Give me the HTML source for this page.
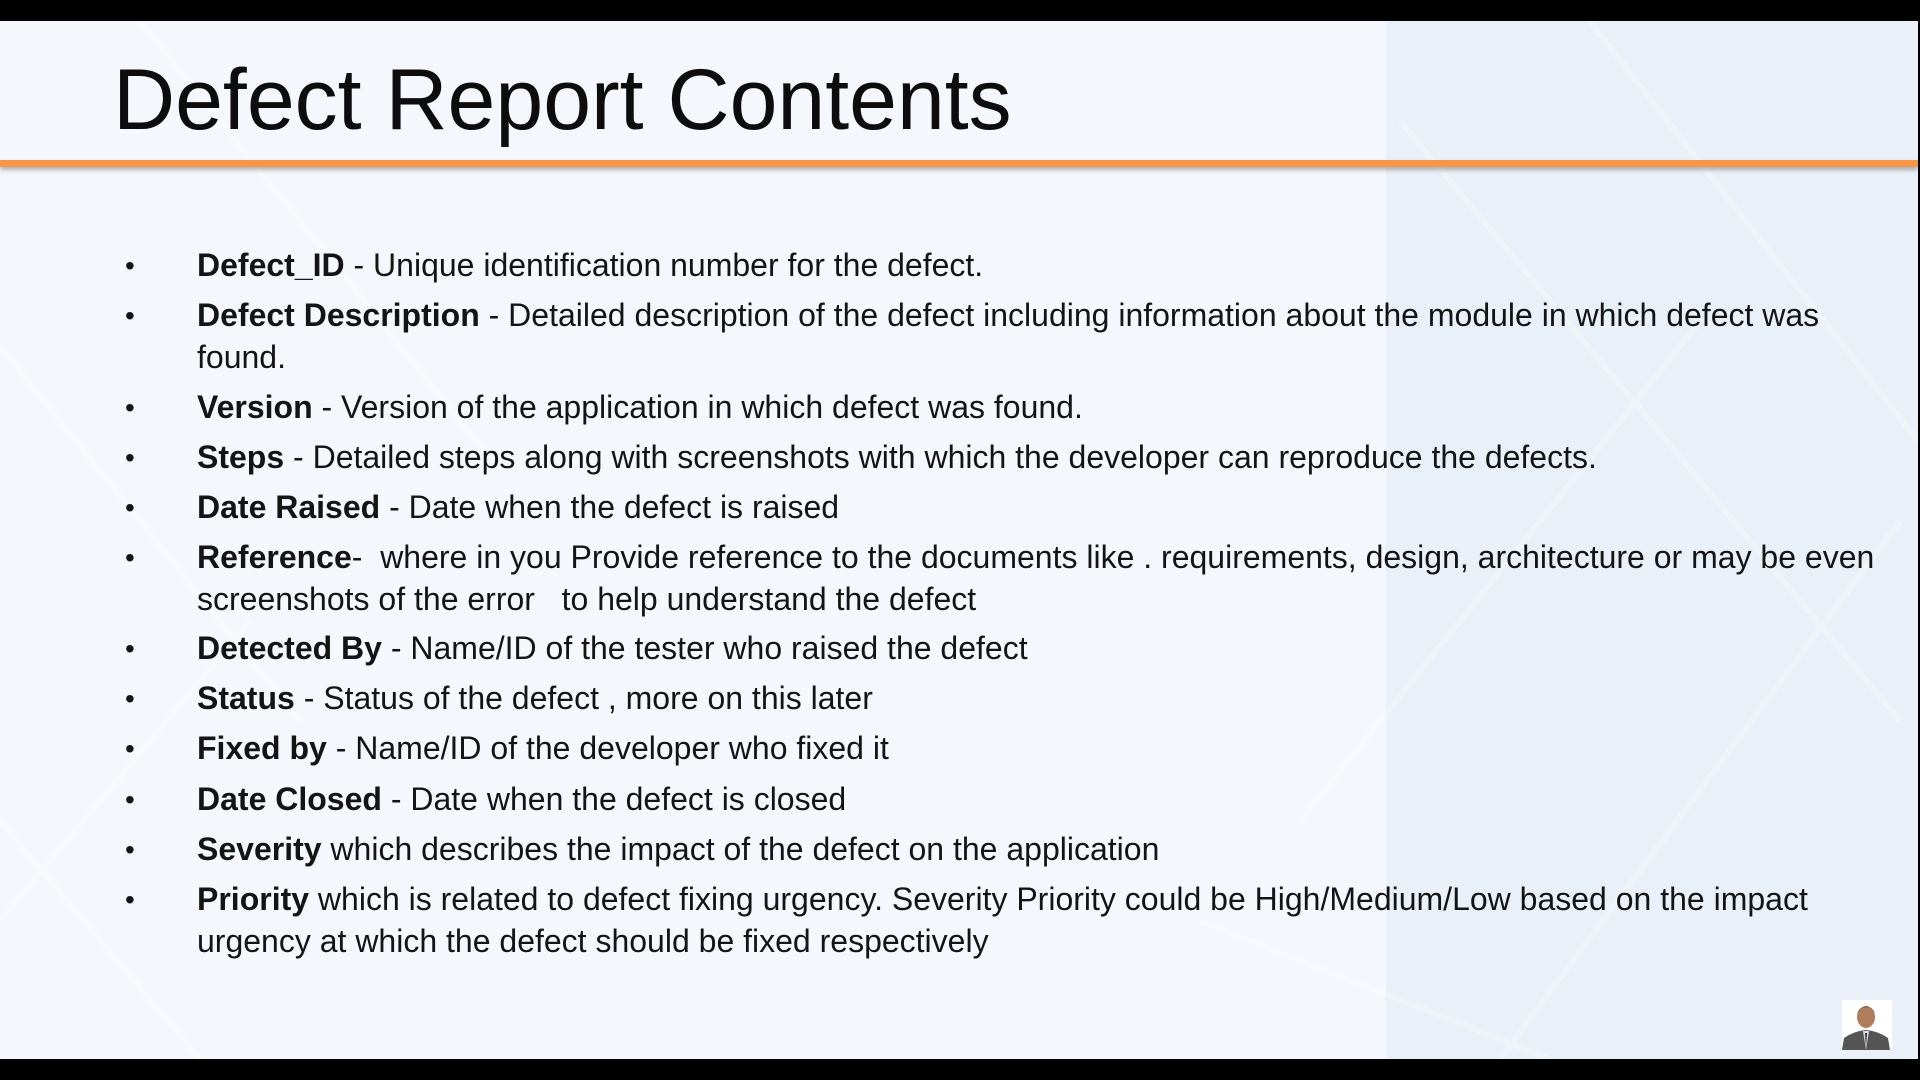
<!DOCTYPE html>
<html><head><meta charset="utf-8"><style>
html,body{margin:0;padding:0}
body{width:1920px;height:1080px;position:relative;overflow:hidden;background:#000;font-family:"Liberation Sans",sans-serif;color:#111}
#slide{position:absolute;left:0;top:21px;width:1918px;height:1038px;background:#f4f8fc;overflow:hidden}
#panel{position:absolute;left:1386px;top:0;width:532px;height:1038px;background:#e9f0f7}
h1{position:absolute;left:113px;top:30px;margin:0;font-weight:normal;font-size:86px;color:#0d0d0d;white-space:nowrap}
#bar{position:absolute;left:0;top:139px;width:1918px;height:7px;background:#f79646;box-shadow:0 3px 4px rgba(90,90,90,.45)}
.it{position:absolute;left:197px;font-size:32px;line-height:41.5px;white-space:nowrap;color:#141414}
.it:before{content:"•";position:absolute;left:-72px;top:0;font-size:28px}
b{font-weight:bold}
#photo{position:absolute;left:1842px;top:979px;width:50px;height:50px;background:#fff;overflow:hidden}
</style></head><body>
<div id="slide">
<div id="panel"></div>
<svg width="1918" height="1038" style="position:absolute;left:0;top:0" stroke="#fff" stroke-width="6" opacity=".3" fill="none">
<path d="M-100 200 L300 700 M100 -50 L500 450 M1400 100 L1900 700 M1550 -50 L1918 420 M1700 300 L1300 800 M1900 500 L1500 1038 M1200 900 L1550 1038 M0 800 L200 1038 M250 600 L0 900"/>
</svg>
<h1>Defect Report Contents</h1>
<div id="bar"></div>
<div class="it" style="top:224px"><b>Defect_ID</b> - Unique identification number for the defect.</div>
<div class="it" style="top:274px"><b>Defect Description</b> - Detailed description of the defect including information about the module in which defect was<br>found.</div>
<div class="it" style="top:366px"><b>Version</b> - Version of the application in which defect was found.</div>
<div class="it" style="top:416px"><b>Steps</b> - Detailed steps along with screenshots with which the developer can reproduce the defects.</div>
<div class="it" style="top:466px"><b>Date Raised</b> - Date when the defect is raised</div>
<div class="it" style="top:516px"><b>Reference</b>-&nbsp; where in you Provide reference to the documents like . requirements, design, architecture or may be even<br>screenshots of the error &nbsp; to help understand the defect</div>
<div class="it" style="top:607px"><b>Detected By</b> - Name/ID of the tester who raised the defect</div>
<div class="it" style="top:657px"><b>Status</b> - Status of the defect , more on this later</div>
<div class="it" style="top:707px"><b>Fixed by</b> - Name/ID of the developer who fixed it</div>
<div class="it" style="top:758px"><b>Date Closed</b> - Date when the defect is closed</div>
<div class="it" style="top:808px"><b>Severity</b> which describes the impact of the defect on the application</div>
<div class="it" style="top:858px"><b>Priority</b> which is related to defect fixing urgency. Severity Priority could be High/Medium/Low based on the impact<br>urgency at which the defect should be fixed respectively</div>
<div id="photo"><svg width="50" height="50"><ellipse cx="24" cy="17" rx="9" ry="11" fill="#b07c5e"/><path d="M15 13 Q24 0 33 13 Q30 7 24 7 Q18 7 15 13Z" fill="#222"/><path d="M0 50 L2 38 Q12 31 24 30 Q36 31 46 38 L48 50Z" fill="#555"/><path d="M21 31 L24 50 L27 31Z" fill="#ddd"/><path d="M23 33 L24 48 L25 33Z" fill="#334"/></svg></div>
</div>
</body></html>
